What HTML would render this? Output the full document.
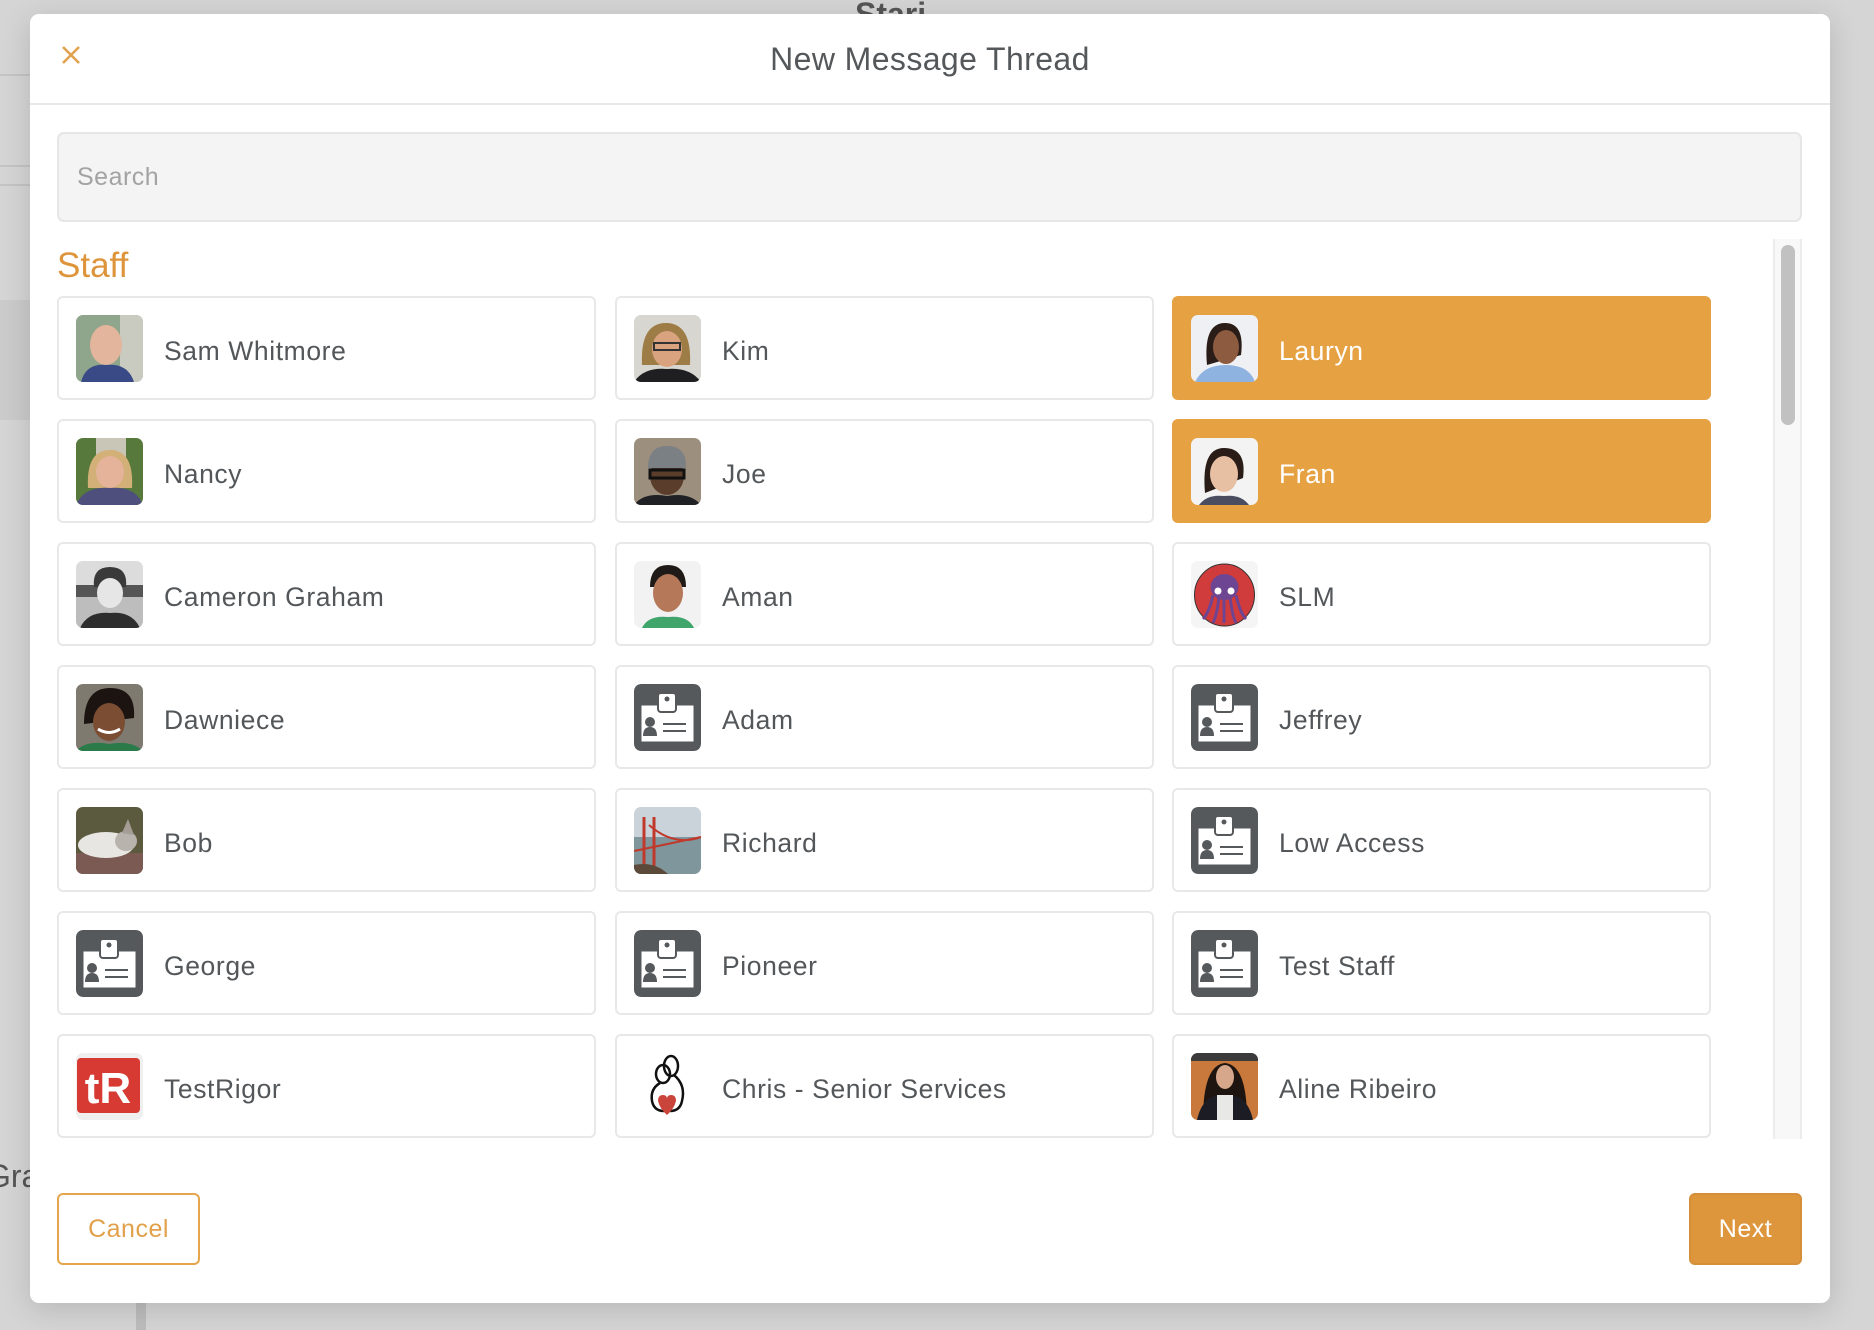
<!DOCTYPE html>
<html><head><meta charset="utf-8"><style>
*{box-sizing:border-box;margin:0;padding:0}
html,body{width:1874px;height:1330px;overflow:hidden;background:#d5d5d5;font-family:"Liberation Sans",sans-serif}
.bgline{position:absolute;left:0;width:30px;height:2px;background:#c4c4c4}
.modal{position:absolute;left:30px;top:14px;width:1800px;height:1289px;background:#fff;border-radius:9px;box-shadow:0 6px 30px rgba(0,0,0,.15)}
.x{position:absolute;left:60px;top:44px;width:22px;height:22px}
.title{position:absolute;left:30px;width:1800px;top:41px;text-align:center;font-size:32px;color:#55585b;letter-spacing:.4px}
.hr{position:absolute;left:30px;width:1800px;top:103px;height:2px;background:#e8e8e8}
.search{position:absolute;left:57px;top:132px;width:1745px;height:90px;background:#f4f4f4;border:2px solid #e6e6e6;border-radius:7px;font-size:25px;color:#a3a3a3;padding:29px 0 0 18px;letter-spacing:.5px}
.staff{position:absolute;left:57px;top:246px;font-size:35px;color:#de943a}
.list{position:absolute;left:0;top:239px;width:1874px;height:900px;overflow:hidden}
.card{position:absolute;width:539px;height:104px;border:2px solid #e8e8e8;border-radius:6px;background:#fff}
.card.sel{background:#e6a142;border-color:#e6a142}
.card .av{position:absolute;left:17px;top:17px;width:67px;height:67px;border-radius:7px;overflow:hidden}
.card .nm{position:absolute;left:105px;top:38px;font-size:26.5px;color:#54575a;letter-spacing:.6px;white-space:nowrap}
.card.sel .nm{color:#fff}
.track{position:absolute;left:1773px;top:239px;width:29px;height:900px;background:#f8f8f8;border-left:2px solid #ececec;border-right:2px solid #ececec}
.thumb{position:absolute;left:1781px;top:245px;width:14px;height:180px;background:#c1c1c1;border-radius:7px}
.btn{position:absolute;top:1193px;height:72px;border-radius:6px;font-size:25px;text-align:center;line-height:68px;letter-spacing:.5px}
.cancel{left:57px;width:143px;border:2px solid #e6a54c;color:#e2a04a}
.next{left:1689px;width:113px;background:#de963c;border:2px solid #d58f38;color:#fff}
</style></head><body>
<div class="bgline" style="top:74px"></div><div class="bgline" style="top:165px"></div><div class="bgline" style="top:184px"></div>
<div style="position:absolute;left:0;top:300px;width:30px;height:120px;background:#cbcbcb"></div>
<div style="position:absolute;left:855px;top:-4px;font-size:32px;color:#555;font-weight:bold">Stari</div>
<div style="position:absolute;left:-14px;top:1158px;font-size:32px;color:#555">Gra</div>
<div style="position:absolute;left:136px;top:1303px;width:10px;height:27px;background:#bdbdbd"></div>
<div class="modal"></div>
<svg class="x" viewBox="0 0 22 22"><path d="M3 3L19 19M19 3L3 19" stroke="#e0a24e" stroke-width="2.6"/></svg>
<div class="title">New Message Thread</div>
<div class="hr"></div>
<div class="search">Search</div>
<div class="staff">Staff</div>
<div class="track"></div><div class="thumb"></div>
<div class="list">
<div style="position:absolute;left:0;top:-239px;width:1874px;height:1330px">

<div class="card" style="left:57px;top:296px"><div class="av"><svg width="67" height="67"><rect width="67" height="67" fill="#8fa58c"/><rect x="44" width="23" height="67" fill="#c9cbc0"/><ellipse cx="30" cy="30" rx="16" ry="20" fill="#e2b59c"/><path d="M5 67Q10 48 30 50Q52 48 58 67Z" fill="#3a4a86"/></svg></div><div class="nm">Sam Whitmore</div></div>
<div class="card" style="left:615px;top:296px"><div class="av"><svg width="67" height="67"><rect width="67" height="67" fill="#d8d6d0"/><path d="M8 50Q6 8 32 8Q58 8 56 50Z" fill="#9d7c45"/><ellipse cx="33" cy="34" rx="15" ry="18" fill="#d9a37f"/><rect x="20" y="28" width="26" height="7" fill="none" stroke="#333" stroke-width="2"/><path d="M0 67Q10 52 33 54Q56 52 67 67Z" fill="#1f1f22"/></svg></div><div class="nm">Kim</div></div>
<div class="card sel" style="left:1172px;top:296px"><div class="av"><svg width="67" height="67"><rect width="67" height="67" fill="#eef0f3"/><path d="M16 50Q12 8 34 8Q54 8 50 40Z" fill="#2a1c17"/><ellipse cx="35" cy="32" rx="13" ry="17" fill="#8d5b40"/><path d="M4 67Q12 50 35 50Q58 50 64 67Z" fill="#8fb3e1"/></svg></div><div class="nm">Lauryn</div></div>

<div class="card" style="left:57px;top:419px"><div class="av"><svg width="67" height="67"><rect width="67" height="67" fill="#577a3c"/><rect x="20" width="30" height="20" fill="#c9c6b8"/><path d="M12 50Q10 12 34 12Q58 12 56 50Z" fill="#d2b077"/><ellipse cx="34" cy="34" rx="14" ry="16" fill="#e5b39a"/><path d="M0 67Q8 48 34 50Q60 48 67 67Z" fill="#4e4f7d"/></svg></div><div class="nm">Nancy</div></div>
<div class="card" style="left:615px;top:419px"><div class="av"><svg width="67" height="67"><rect width="67" height="67" fill="#9d8f7e"/><ellipse cx="33" cy="38" rx="17" ry="19" fill="#5b3d2c"/><path d="M14 30Q14 8 33 8Q53 8 52 30Z" fill="#7b8085"/><rect x="16" y="32" width="34" height="8" fill="none" stroke="#111" stroke-width="3"/><path d="M0 67Q10 54 33 58Q56 54 67 67Z" fill="#202125"/></svg></div><div class="nm">Joe</div></div>
<div class="card sel" style="left:1172px;top:419px"><div class="av"><svg width="67" height="67"><rect width="67" height="67" fill="#f3f3f3"/><path d="M14 55Q10 10 33 10Q56 10 52 40Z" fill="#2a1d17"/><ellipse cx="33" cy="36" rx="14" ry="18" fill="#e7c0a4"/><path d="M8 67Q16 56 33 58Q50 56 58 67Z" fill="#4a4c60"/></svg></div><div class="nm">Fran</div></div>

<div class="card" style="left:57px;top:542px"><div class="av"><svg width="67" height="67"><rect width="67" height="67" fill="#dcdcdc"/><rect y="24" width="67" height="12" fill="#555"/><rect y="36" width="67" height="31" fill="#bdbdbd"/><path d="M18 26Q16 6 34 6Q52 6 50 26Z" fill="#3a3a3a"/><ellipse cx="34" cy="32" rx="13" ry="15" fill="#e6e6e6"/><path d="M4 67Q12 50 34 52Q56 50 64 67Z" fill="#2d2d2d"/></svg></div><div class="nm">Cameron Graham</div></div>
<div class="card" style="left:615px;top:542px"><div class="av"><svg width="67" height="67"><rect width="67" height="67" fill="#f2f2f2"/><path d="M16 26Q16 4 34 4Q52 4 52 26Z" fill="#1f1a17"/><ellipse cx="34" cy="32" rx="15" ry="19" fill="#b5795a"/><path d="M8 67Q14 54 34 56Q54 54 60 67Z" fill="#3fa56a"/></svg></div><div class="nm">Aman</div></div>
<div class="card" style="left:1172px;top:542px"><div class="av" style="background:#f5f5f5"><svg width="67" height="67"><ellipse cx="33.5" cy="34" rx="30" ry="31" fill="#d03b3b" stroke="#333" stroke-width="1"/><ellipse cx="33.5" cy="26" rx="14" ry="13" fill="#6e4592"/><path d="M22 34Q18 52 12 58M28 36Q26 54 22 62M33 37V62M39 36Q41 54 45 62M45 34Q49 52 55 58" stroke="#6e4592" stroke-width="3" fill="none"/><circle cx="27" cy="30" r="3.5" fill="#fff"/><circle cx="40" cy="30" r="3.5" fill="#fff"/></svg></div><div class="nm">SLM</div></div>

<div class="card" style="left:57px;top:665px"><div class="av"><svg width="67" height="67"><rect width="67" height="67" fill="#7f7a70"/><path d="M8 40Q8 4 34 4Q60 4 58 34Z" fill="#1c1410"/><ellipse cx="33" cy="38" rx="16" ry="19" fill="#7b4d33"/><path d="M22 45Q33 52 44 45" stroke="#fff" stroke-width="3" fill="none"/><path d="M0 67Q10 56 33 60Q56 56 67 67Z" fill="#2b7a49"/></svg></div><div class="nm">Dawniece</div></div>
<div class="card" style="left:615px;top:665px"><div class="av"><svg width="67" height="67"><rect width="67" height="67" rx="7" fill="#55595c"/><rect x="7" y="21" width="53" height="37" fill="#fff" stroke="#55595c" stroke-width="1"/><rect x="24" y="9" width="18" height="19" rx="3" fill="#fff" stroke="#55595c" stroke-width="2"/><circle cx="33" cy="15" r="2.5" fill="#55595c"/><circle cx="16" cy="38" r="5" fill="#55595c"/><path d="M9 52Q9 43 16 43Q23 43 23 52Z" fill="#55595c"/><path d="M29 40H52M29 47H52" stroke="#55595c" stroke-width="2"/></svg></div><div class="nm">Adam</div></div>
<div class="card" style="left:1172px;top:665px"><div class="av"><svg width="67" height="67"><rect width="67" height="67" rx="7" fill="#55595c"/><rect x="7" y="21" width="53" height="37" fill="#fff" stroke="#55595c" stroke-width="1"/><rect x="24" y="9" width="18" height="19" rx="3" fill="#fff" stroke="#55595c" stroke-width="2"/><circle cx="33" cy="15" r="2.5" fill="#55595c"/><circle cx="16" cy="38" r="5" fill="#55595c"/><path d="M9 52Q9 43 16 43Q23 43 23 52Z" fill="#55595c"/><path d="M29 40H52M29 47H52" stroke="#55595c" stroke-width="2"/></svg></div><div class="nm">Jeffrey</div></div>

<div class="card" style="left:57px;top:788px"><div class="av"><svg width="67" height="67"><rect width="67" height="67" fill="#5b5a3e"/><rect y="46" width="67" height="21" fill="#7a5a52"/><ellipse cx="30" cy="38" rx="28" ry="13" fill="#e8e6e2"/><ellipse cx="50" cy="34" rx="11" ry="10" fill="#b9b3ad"/><path d="M46 26L52 12L58 28Z" fill="#a49d96"/></svg></div><div class="nm">Bob</div></div>
<div class="card" style="left:615px;top:788px"><div class="av"><svg width="67" height="67"><rect width="67" height="67" fill="#c9d3d9"/><rect y="30" width="67" height="37" fill="#7f969d"/><path d="M10 10V60M20 10V60" stroke="#c0392b" stroke-width="3"/><path d="M15 18Q40 40 67 30M0 44L67 30" stroke="#c0392b" stroke-width="2" fill="none"/><path d="M0 58Q20 54 34 67H0Z" fill="#5b4a3a"/></svg></div><div class="nm">Richard</div></div>
<div class="card" style="left:1172px;top:788px"><div class="av"><svg width="67" height="67"><rect width="67" height="67" rx="7" fill="#55595c"/><rect x="7" y="21" width="53" height="37" fill="#fff" stroke="#55595c" stroke-width="1"/><rect x="24" y="9" width="18" height="19" rx="3" fill="#fff" stroke="#55595c" stroke-width="2"/><circle cx="33" cy="15" r="2.5" fill="#55595c"/><circle cx="16" cy="38" r="5" fill="#55595c"/><path d="M9 52Q9 43 16 43Q23 43 23 52Z" fill="#55595c"/><path d="M29 40H52M29 47H52" stroke="#55595c" stroke-width="2"/></svg></div><div class="nm">Low Access</div></div>

<div class="card" style="left:57px;top:911px"><div class="av"><svg width="67" height="67"><rect width="67" height="67" rx="7" fill="#55595c"/><rect x="7" y="21" width="53" height="37" fill="#fff" stroke="#55595c" stroke-width="1"/><rect x="24" y="9" width="18" height="19" rx="3" fill="#fff" stroke="#55595c" stroke-width="2"/><circle cx="33" cy="15" r="2.5" fill="#55595c"/><circle cx="16" cy="38" r="5" fill="#55595c"/><path d="M9 52Q9 43 16 43Q23 43 23 52Z" fill="#55595c"/><path d="M29 40H52M29 47H52" stroke="#55595c" stroke-width="2"/></svg></div><div class="nm">George</div></div>
<div class="card" style="left:615px;top:911px"><div class="av"><svg width="67" height="67"><rect width="67" height="67" rx="7" fill="#55595c"/><rect x="7" y="21" width="53" height="37" fill="#fff" stroke="#55595c" stroke-width="1"/><rect x="24" y="9" width="18" height="19" rx="3" fill="#fff" stroke="#55595c" stroke-width="2"/><circle cx="33" cy="15" r="2.5" fill="#55595c"/><circle cx="16" cy="38" r="5" fill="#55595c"/><path d="M9 52Q9 43 16 43Q23 43 23 52Z" fill="#55595c"/><path d="M29 40H52M29 47H52" stroke="#55595c" stroke-width="2"/></svg></div><div class="nm">Pioneer</div></div>
<div class="card" style="left:1172px;top:911px"><div class="av"><svg width="67" height="67"><rect width="67" height="67" rx="7" fill="#55595c"/><rect x="7" y="21" width="53" height="37" fill="#fff" stroke="#55595c" stroke-width="1"/><rect x="24" y="9" width="18" height="19" rx="3" fill="#fff" stroke="#55595c" stroke-width="2"/><circle cx="33" cy="15" r="2.5" fill="#55595c"/><circle cx="16" cy="38" r="5" fill="#55595c"/><path d="M9 52Q9 43 16 43Q23 43 23 52Z" fill="#55595c"/><path d="M29 40H52M29 47H52" stroke="#55595c" stroke-width="2"/></svg></div><div class="nm">Test Staff</div></div>

<div class="card" style="left:57px;top:1034px"><div class="av" style="background:#efefef"><svg width="67" height="67"><rect x="1" y="5" width="63" height="55" rx="4" fill="#d63a32"/><text x="32" y="50" text-anchor="middle" font-family="Liberation Sans" font-weight="bold" font-size="44" fill="#fff">tR</text></svg></div><div class="nm">TestRigor</div></div>
<div class="card" style="left:615px;top:1034px"><div class="av"><svg width="67" height="67"><g fill="none" stroke="#111" stroke-width="2.5"><ellipse cx="37" cy="13" rx="7" ry="10"/><ellipse cx="29" cy="21" rx="7" ry="9"/><path d="M26 30Q16 36 18 48Q20 58 30 58M40 22Q52 32 48 48Q46 58 36 58"/></g><path d="M24 48Q24 42 29 42Q33 42 33 46Q33 42 37 42Q42 42 42 48Q40 56 33 62Q26 56 24 48Z" fill="#c9453c"/></svg></div><div class="nm">Chris - Senior Services</div></div>
<div class="card" style="left:1172px;top:1034px"><div class="av"><svg width="67" height="67"><rect width="67" height="67" fill="#c9793c"/><rect width="67" height="8" fill="#3b3b3b"/><path d="M12 67Q12 12 34 10Q56 12 56 67Z" fill="#1e1511"/><ellipse cx="34" cy="24" rx="9" ry="12" fill="#d6a78a"/><path d="M6 67Q12 40 34 42Q56 40 62 67Z" fill="#1c1d24"/><rect x="26" y="42" width="16" height="25" fill="#e8e8e6"/></svg></div><div class="nm">Aline Ribeiro</div></div>

</div></div>
<div class="btn cancel">Cancel</div>
<div class="btn next">Next</div>
</body></html>
